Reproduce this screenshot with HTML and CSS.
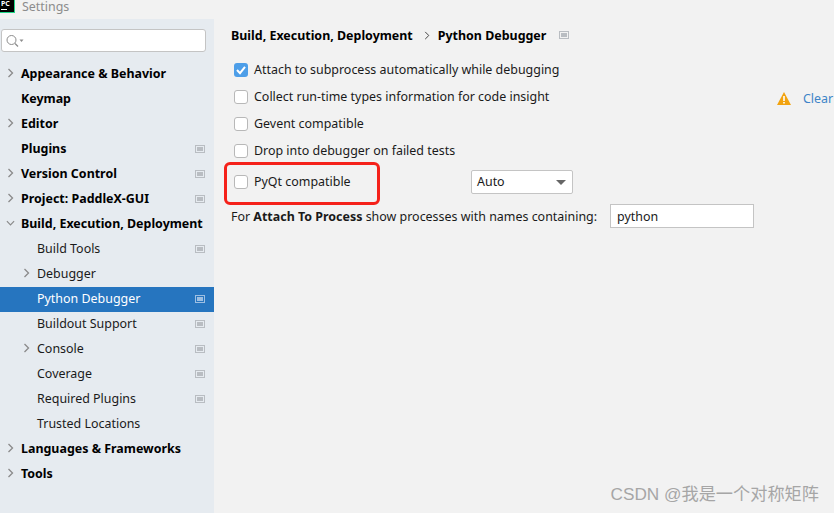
FILE: index.html
```html
<!DOCTYPE html>
<html lang="en">
<head>
  <meta charset="UTF-8">
  <meta name="viewport" content="width=device-width, initial-scale=1.0">
  <title>Settings</title>
  <link rel="stylesheet" href="styles.css">
</head>
<body>
  <div class="titlebar">
    <div class="logo"><span class="logo-text">PC</span><span class="logo-bar"></span></div>
    <span class="title">Settings</span>
  </div>

  <div class="main">
    <div class="sidebar">
      <div class="search">
        <svg width="20" height="14" viewBox="0 0 20 14"><circle cx="6.5" cy="6" r="4.5" fill="none" stroke="#8c8c8c"/><path d="M10 9.5l3 3" stroke="#8c8c8c" stroke-width="1.2"/><path d="M14.5 5.5h4l-2 2.5z" fill="#8c8c8c"/></svg>
      </div>
      <div class="tree">
        <div class="row top"><svg class="arrow" viewBox="0 0 8 10"><path d="M2 1l4 4-4 4" /></svg>Appearance &amp; Behavior</div>
        <div class="row top">Keymap</div>
        <div class="row top"><svg class="arrow" viewBox="0 0 8 10"><path d="M2 1l4 4-4 4" /></svg>Editor</div>
        <div class="row top">Plugins<span class="mod"></span></div>
        <div class="row top"><svg class="arrow" viewBox="0 0 8 10"><path d="M2 1l4 4-4 4" /></svg>Version Control<span class="mod"></span></div>
        <div class="row top"><svg class="arrow" viewBox="0 0 8 10"><path d="M2 1l4 4-4 4" /></svg>Project: PaddleX-GUI<span class="mod"></span></div>
        <div class="row top"><svg class="arrow" viewBox="0 0 10 8"><path d="M1 2l4 4 4-4" /></svg>Build, Execution, Deployment</div>
        <div class="row sub">Build Tools<span class="mod"></span></div>
        <div class="row sub"><svg class="arrow" viewBox="0 0 8 10"><path d="M2 1l4 4-4 4" /></svg>Debugger</div>
        <div class="row sub selected">Python Debugger<span class="mod"></span></div>
        <div class="row sub">Buildout Support<span class="mod"></span></div>
        <div class="row sub"><svg class="arrow" viewBox="0 0 8 10"><path d="M2 1l4 4-4 4" /></svg>Console<span class="mod"></span></div>
        <div class="row sub">Coverage<span class="mod"></span></div>
        <div class="row sub">Required Plugins<span class="mod"></span></div>
        <div class="row sub">Trusted Locations</div>
        <div class="row top"><svg class="arrow" viewBox="0 0 8 10"><path d="M2 1l4 4-4 4" /></svg>Languages &amp; Frameworks</div>
        <div class="row top"><svg class="arrow" viewBox="0 0 8 10"><path d="M2 1l4 4-4 4" /></svg>Tools</div>
      </div>
    </div>

    <div class="content">
      <div class="crumbs">
        <b>Build, Execution, Deployment</b>
        <svg class="crumb-sep" viewBox="0 0 8 10"><path d="M2 1l4 4-4 4" /></svg>
        <b>Python Debugger</b>
        <span class="mod crumb-mod"></span>
      </div>

      <div class="option">
        <span class="check checked"><svg viewBox="0 0 14 14" width="14" height="14"><path d="M3 7l3 3.2 5-6.4" fill="none" stroke="#fff" stroke-width="2"/></svg></span>
        <span>Attach to subprocess automatically while debugging</span>
      </div>
      <div class="option">
        <span class="check"></span>
        <span>Collect run-time types information for code insight</span>
        <span class="warn-group">
          <svg width="14" height="13" viewBox="0 0 14 13"><path d="M7 0l7 13H0z" fill="#f2a30f"/><path d="M6.2 4h1.6v5H6.2zM6.2 10h1.6v1.6H6.2z" fill="#fff"/></svg>
          <span class="clear-link">Clear</span>
        </span>
      </div>
      <div class="option">
        <span class="check"></span>
        <span>Gevent compatible</span>
      </div>
      <div class="option">
        <span class="check"></span>
        <span>Drop into debugger on failed tests</span>
      </div>
      <div class="option pyqt">
        <span class="check"></span>
        <span class="pyqt-label">PyQt compatible</span>
        <span class="select">Auto<i class="caret"></i></span>
      </div>
      <div class="attach">
        <span>For <b>Attach To Process</b> show processes with names containing:</span>
        <span class="textbox">python</span>
      </div>

      <div class="highlight"></div>
    </div>
  </div>

  <div class="watermark">CSDN @我是一个对称矩阵</div>
</body>
</html>
```

FILE: styles.css
```css
* {
  box-sizing: border-box;
}
html, body {
  height: 100%;
}
body {
  margin: 0;
  width: 834px;
  height: 513px;
  overflow: hidden;
  position: relative;
  font-family: "Noto Sans", "Noto Sans CJK SC", sans-serif;
  font-size: 12.45px;
  color: #1a1a1a;
  background-color: #f2f2f2;
}
.titlebar {
  height: 19px;
  display: flex;
  align-items: flex-start;
}
.logo {
  width: 15px;
  height: 13px;
  background-color: #000;
  border-right: 1px solid #21d789;
  border-bottom: 1px solid #21d789;
  position: relative;
}
.logo-text {
  position: absolute;
  left: 1px;
  top: 0;
  font-size: 7px;
  line-height: 7px;
  font-weight: 700;
  color: #fff;
}
.logo-bar {
  position: absolute;
  left: 1px;
  top: 9px;
  width: 6px;
  height: 1px;
  background-color: #fff;
}
.title {
  margin-left: 7px;
  line-height: 13px;
  color: #8c8c8c;
}
.main {
  display: flex;
  height: 494px;
}
.sidebar {
  width: 214px;
  background-color: #e6ebf0;
  padding-top: 10px;
}
.search {
  width: 205px;
  height: 23px;
  margin-left: 1px;
  background-color: #fff;
  border: 1px solid #c4c4c4;
  border-radius: 3px;
  display: flex;
  align-items: center;
  padding-left: 3px;
}
.tree {
  margin-top: 10px;
}
.row {
  height: 25px;
  padding-bottom: 2px;
  display: flex;
  align-items: center;
  position: relative;
  color: #1a1a1a;
}
.top {
  font-weight: 700;
  padding-left: 21px;
  color: #000;
}
.sub {
  padding-left: 37px;
}
.selected {
  background-color: #2675bf;
  color: #fff;
}
.arrow {
  position: absolute;
  left: 6px;
  top: 6px;
  width: 9px;
  height: 10px;
  fill: none;
  stroke: #8a8a8a;
  stroke-width: 1.3;
}
.sub .arrow {
  left: 22px;
}
.mod {
  position: absolute;
  left: 195px;
  top: 8px;
  width: 10px;
  height: 8px;
  border: 1px solid #b9bdc2;
  background: linear-gradient(#b9bdc2, #b9bdc2) center / 6px 4px no-repeat;
}
.selected .mod {
  border-color: #9dbfe2;
  background: linear-gradient(#9dbfe2, #9dbfe2) center / 6px 4px no-repeat;
}
.content {
  flex: 1;
  position: relative;
  padding-left: 17px;
}
.crumbs {
  display: flex;
  align-items: center;
  height: 18px;
  margin-top: 7px;
  color: #000;
}
.crumb-sep {
  width: 8px;
  height: 9px;
  margin: 0 7px 0 10px;
  fill: none;
  stroke: #444;
  stroke-width: 1.1;
}
.crumb-mod {
  position: static;
  margin-left: 13px;
}
.option {
  height: 27px;
  display: flex;
  align-items: center;
  position: relative;
}
.crumbs + .option {
  margin-top: 12px;
}
.check {
  width: 14px;
  height: 14px;
  margin-left: 3px;
  margin-right: 6px;
  background-color: #fff;
  border: 1px solid #b8b8b8;
  border-radius: 3px;
  flex-shrink: 0;
}
.checked {
  background-color: #4d9ee8;
  border: 0;
}
.checked svg {
  display: block;
}
.warn-group {
  position: absolute;
  left: 546px;
  top: 7px;
  display: flex;
  align-items: center;
  gap: 12px;
}
.clear-link {
  color: #3d84c8;
  white-space: nowrap;
}
.pyqt {
  height: 35px;
}
.pyqt-label {
  width: 217px;
}
.select {
  width: 102px;
  height: 24px;
  background-color: #fff;
  border: 1px solid #c4c4c4;
  border-radius: 2px;
  padding-left: 5px;
  display: flex;
  align-items: center;
  position: relative;
}
.caret {
  position: absolute;
  right: 6px;
  top: 9px;
  border-left: 5px solid transparent;
  border-right: 5px solid transparent;
  border-top: 5px solid #666;
}
.attach {
  height: 32px;
  padding-top: 2px;
  display: flex;
  align-items: center;
  gap: 13px;
}
.textbox {
  width: 144px;
  height: 24px;
  background-color: #fff;
  border: 1px solid #c4c4c4;
  padding-left: 6px;
  display: flex;
  align-items: center;
}
.highlight {
  position: absolute;
  left: 10px;
  top: 143px;
  width: 156px;
  height: 43px;
  border: 3px solid #f5211a;
  border-radius: 6px;
}
.watermark {
  position: absolute;
  right: 15px;
  bottom: 8px;
  font-family: "Liberation Sans", "Noto Sans CJK SC", sans-serif;
  font-size: 17.2px;
  color: #a6a6a6;
}
```
